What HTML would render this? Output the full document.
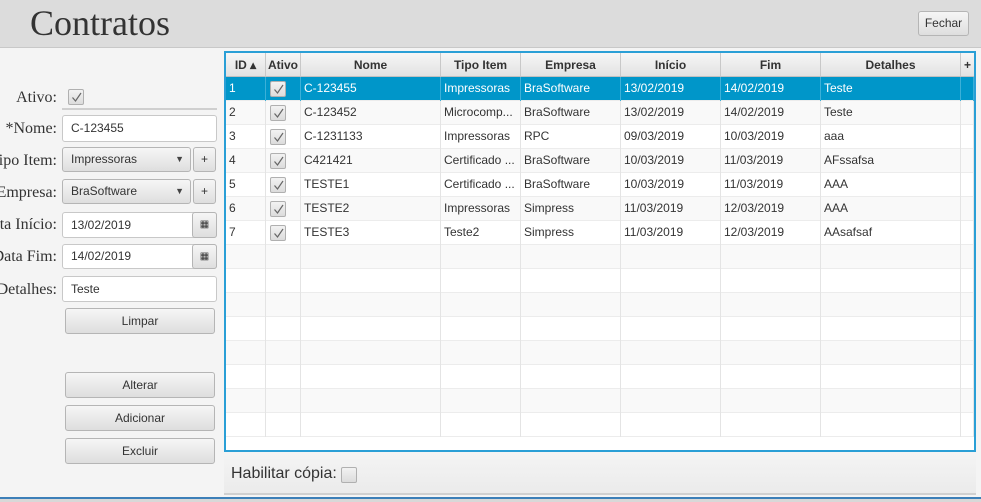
<!DOCTYPE html>
<html><head><meta charset="utf-8"><style>
*{box-sizing:border-box;margin:0;padding:0}
body{width:981px;height:502px;position:relative;overflow:hidden;background:#f4f4f4;font-family:"Liberation Sans",sans-serif;font-size:12px;color:#333}
.a{position:absolute}
.hdr{left:0;top:0;width:981px;height:48px;background:#dcdcdc;border-bottom:1px solid #c8c8c8}
.title{left:30px;top:2px;font-family:"Liberation Serif",serif;font-size:36px;color:#333}
.btn{position:absolute;background:linear-gradient(#f6f6f6,#dedede);border:1px solid #b5b5b5;border-radius:3px;text-align:center;font-size:12px;color:#333}
.lbl{position:absolute;right:924px;font-family:"Liberation Serif",serif;font-size:16px;color:#333;white-space:nowrap;text-align:right}
.fld{position:absolute;background:#fff;border:1px solid #c8c8c8;border-radius:3px;padding-left:8px;font-size:12px;color:#333}
.cb{position:absolute;width:16px;height:16px;border:1px solid #b0b0b0;border-radius:2px;background:linear-gradient(#f2f2f2,#dcdcdc)}
.cb svg{position:absolute;left:2px;top:2px}
.tbl{left:224px;top:51px;width:752px;height:401px;border:2px solid #2a9fd6;background:#fff;overflow:hidden}
.row{position:absolute;left:0;width:748px;height:24px;border-bottom:1px solid #ececec}
.cell{position:absolute;top:0;height:24px;line-height:23px;padding-left:3px;border-right:1px solid #e4e4e4;white-space:nowrap;overflow:hidden}
.th{position:absolute;top:0;height:24px;line-height:24px;text-align:center;font-weight:bold;border-right:1px solid #c8c8c8;background:linear-gradient(#f6f6f6,#e2e2e2);border-bottom:1px solid #c0c0c0}
.sel{background:#0096c9;color:#fff}
.sel .cell{border-right-color:#3cb0d8}
</style></head><body>
<div class="a hdr"></div>
<div class="a title">Contratos</div>
<div class="btn" style="left:918px;top:11px;width:51px;height:25px;line-height:23px">Fechar</div>

<div class="lbl" style="top:89px">Ativo:</div>
<div class="cb" style="left:68px;top:89px"><svg width="11" height="11"><path d="M1.5 5.5 L4.5 9 L10 1" stroke="#666" stroke-width="1.2" fill="none"/></svg></div>
<div class="a" style="left:62px;top:108px;width:155px;height:2px;background:#cfcfcf"></div>
<div class="lbl" style="top:120px">*Nome:</div>
<div class="fld" style="left:62px;top:115px;width:155px;height:27px;line-height:25px">C-123455</div>
<div class="lbl" style="top:152px">Tipo Item:</div>
<div class="btn" style="left:62px;top:147px;width:129px;height:25px;line-height:23px;text-align:left;padding-left:8px">Impressoras<span style="position:absolute;right:6px;top:0;font-size:9px;color:#444">▼</span></div>
<div class="btn" style="left:193px;top:147px;width:23px;height:25px;line-height:23px">+</div>
<div class="lbl" style="top:184px">Empresa:</div>
<div class="btn" style="left:62px;top:179px;width:129px;height:25px;line-height:23px;text-align:left;padding-left:8px">BraSoftware<span style="position:absolute;right:6px;top:0;font-size:9px;color:#444">▼</span></div>
<div class="btn" style="left:193px;top:179px;width:23px;height:25px;line-height:23px">+</div>
<div class="lbl" style="top:216px">Data Início:</div>
<div class="fld" style="left:62px;top:212px;width:155px;height:26px;line-height:24px">13/02/2019</div>
<div class="btn" style="left:192px;top:212px;width:25px;height:26px;line-height:24px;font-size:10px">▦</div>
<div class="lbl" style="top:248px">Data Fim:</div>
<div class="fld" style="left:62px;top:244px;width:155px;height:25px;line-height:23px">14/02/2019</div>
<div class="btn" style="left:192px;top:244px;width:25px;height:25px;line-height:23px;font-size:10px">▦</div>
<div class="lbl" style="top:281px">Detalhes:</div>
<div class="fld" style="left:62px;top:276px;width:155px;height:26px;line-height:24px">Teste</div>
<div class="btn" style="left:65px;top:308px;width:150px;height:26px;line-height:24px">Limpar</div>
<div class="btn" style="left:65px;top:372px;width:150px;height:26px;line-height:24px">Alterar</div>
<div class="btn" style="left:65px;top:405px;width:150px;height:26px;line-height:24px">Adicionar</div>
<div class="btn" style="left:65px;top:438px;width:150px;height:26px;line-height:24px">Excluir</div>

<div class="a tbl">
<div class="th" style="left:0;width:40px">ID ▴</div>
<div class="th" style="left:40px;width:35px">Ativo</div>
<div class="th" style="left:75px;width:140px">Nome</div>
<div class="th" style="left:215px;width:80px">Tipo Item</div>
<div class="th" style="left:295px;width:100px">Empresa</div>
<div class="th" style="left:395px;width:100px">Início</div>
<div class="th" style="left:495px;width:100px">Fim</div>
<div class="th" style="left:595px;width:140px">Detalhes</div>
<div class="th" style="left:735px;width:14px">+</div>
<div id="rows"></div>
</div>

<div class="a" style="left:224px;top:453px;width:752px;height:42px;background:linear-gradient(#f4f4f4,#ebebeb);border-bottom:2px solid #d0d0d0"></div>
<div class="a" style="left:231px;top:465px;font-size:16px;color:#333">Habilitar cópia:</div>
<div class="cb" style="left:341px;top:467px"></div>
<div class="a" style="left:0;top:497px;width:981px;height:5px;background:#d8d8d8;border-top:2px solid #3c7fb8"></div>

<script>
var d=[["1","C-123455","Impressoras","BraSoftware","13/02/2019","14/02/2019","Teste"],
["2","C-123452","Microcomp...","BraSoftware","13/02/2019","14/02/2019","Teste"],
["3","C-1231133","Impressoras","RPC","09/03/2019","10/03/2019","aaa"],
["4","C421421","Certificado ...","BraSoftware","10/03/2019","11/03/2019","AFssafsa"],
["5","TESTE1","Certificado ...","BraSoftware","10/03/2019","11/03/2019","AAA"],
["6","TESTE2","Impressoras","Simpress","11/03/2019","12/03/2019","AAA"],
["7","TESTE3","Teste2","Simpress","11/03/2019","12/03/2019","AAsafsaf"]];
var L=[0,40,75,215,295,395,495,595,735],W=[40,35,140,80,100,100,100,140,13],h="";
for(var i=0;i<15;i++){var r=d[i];var bg=i==0?"":(i%2?"background:#f9f9f9":"background:#fff");
h+='<div class="row'+(i==0?' sel':'')+'" style="top:'+(24+i*24)+'px;'+bg+'">';
for(var c=0;c<9;c++){var t="";if(r){if(c==0)t=r[0];else if(c==1)t='<span class="cb" style="left:4px;top:4px"><svg width="11" height="11"><path d="M1.5 5.5 L4.5 9 L10 1" stroke="#666" stroke-width="1.2" fill="none"/></svg></span>';else if(c<8)t=r[c-1];}
h+='<div class="cell" style="left:'+L[c]+'px;width:'+W[c]+'px">'+t+'</div>';}
h+='</div>';}
document.getElementById("rows").innerHTML=h;
</script>
</body></html>
